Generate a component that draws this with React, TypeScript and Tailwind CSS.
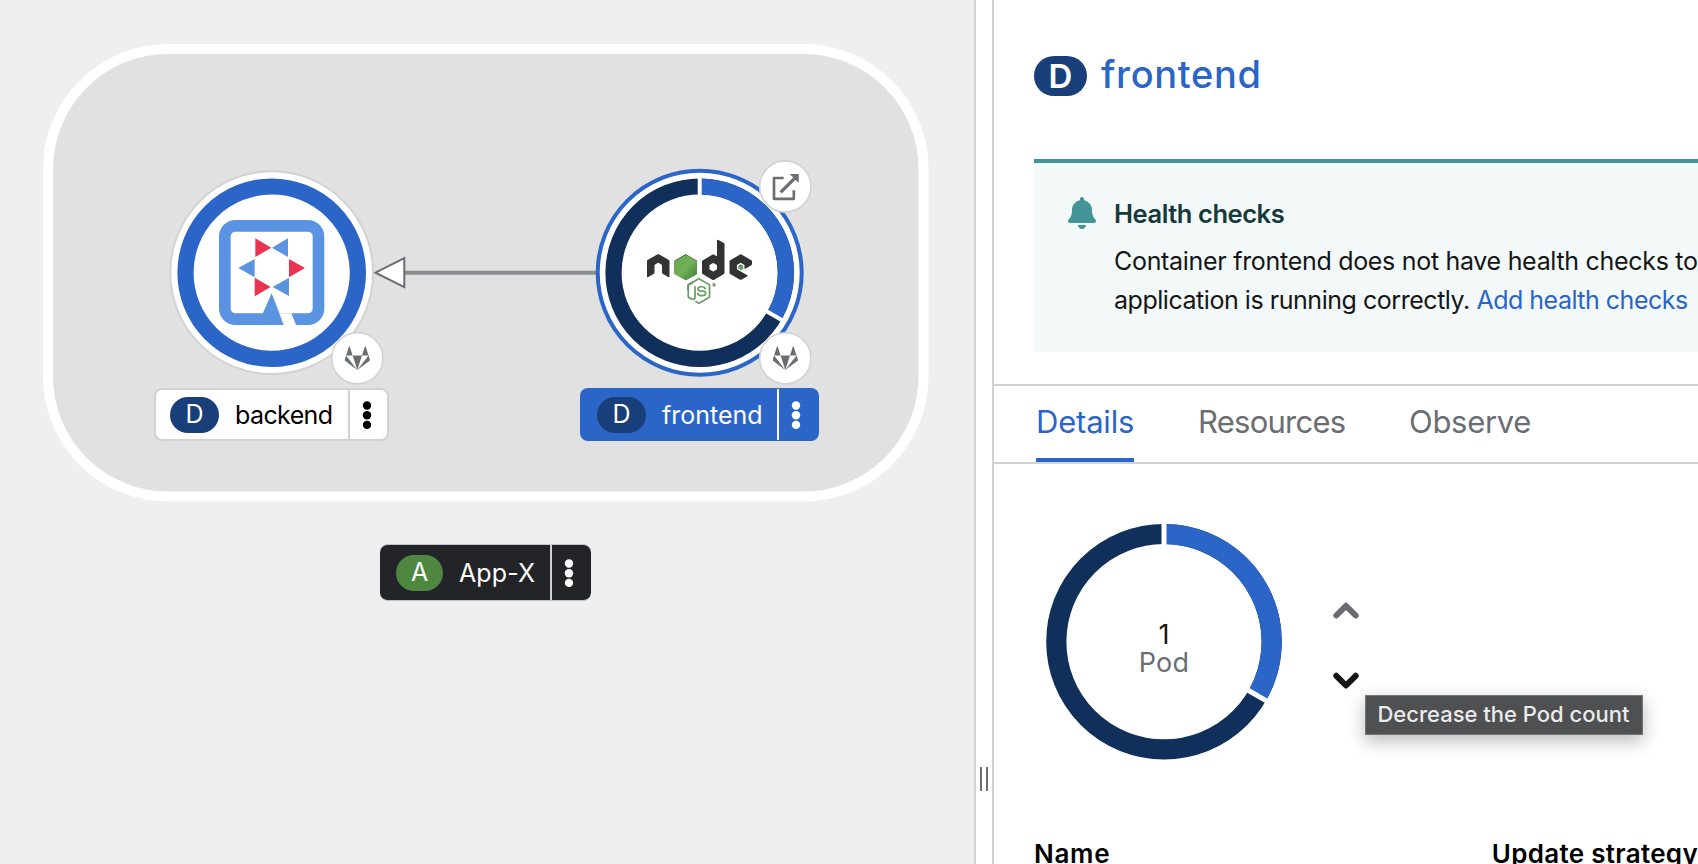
import React from "react";
import { FaBell, FaGitlab, FaNode } from "react-icons/fa";

const BLUE = "#2a65c7";
const NAVY = "#102f5a";

function Dots() {
  return (
    <svg width="10" height="30" viewBox="0 0 10 30" fill="currentColor">
      <circle cx="5" cy="5.5" r="4.2" />
      <circle cx="5" cy="15.2" r="4.2" />
      <circle cx="5" cy="24.9" r="4.2" />
    </svg>
  );
}

function Badge({ x, y, children }: { x: number; y: number; children: React.ReactNode }) {
  return (
    <g>
      <circle cx={x} cy={y} r="25.6" fill="#fff" stroke="#d2d2d2" strokeWidth="1.6" />
      {children}
    </g>
  );
}

function Donut({ cx, cy, r, width, gap }: { cx: number; cy: number; r: number; width: number; gap: number }) {
  const sin = Math.sin((Math.PI * 2) / 3);
  const inner = r - width / 2 - 1;
  const outer = r + width / 2 + 1;
  return (
    <g fill="none">
      <circle cx={cx} cy={cy} r={r} stroke={NAVY} strokeWidth={width} />
      <path d={`M${cx} ${cy - r}A${r} ${r} 0 0 1 ${cx + r * sin} ${cy + r / 2}`} stroke={BLUE} strokeWidth={width} />
      <path
        d={`M${cx} ${cy - inner}V${cy - outer}M${cx + inner * sin} ${cy + inner / 2}L${cx + outer * sin} ${cy + outer / 2}`}
        stroke="#fff"
        strokeWidth={gap}
      />
    </g>
  );
}

function QuayLogo() {
  return (
    <g transform="translate(140 150) scale(.33333)">
      <rect x="254.5" y="227.5" width="281" height="280" rx="32" fill="#fff" stroke="#5b93e3" strokeWidth="35" />
      <path d="M395 430L432 525H353Z" fill="#5b93e3" />
      <path d="M395 430L432 527H469L454 489.500H418Z" fill="#fff" />
      <path d="M346 265V321L394 293ZM447 327V382L495 354ZM344 383V439L392 411Z" fill="#ea3352" />
      <path d="M444 265V321L396 293ZM344 327V382L295 354ZM447 383V438L398 411Z" fill="#5b93e3" />
    </g>
  );
}

function NodeLogo() {
  return (
    <g>
      <defs>
        <clipPath id="node-word">
          <path d="M640 230H760V290H713V282.500L705.500 280.500L699.300 277.300L693 281V290H640Z" />
        </clipPath>
        <clipPath id="node-js">
          <path d="M683 306V284L693 281L699.300 277.300L706 281.500L713 282.700H722V306Z" />
        </clipPath>
        <linearGradient id="node-green" x1="0" y1="0" x2="1" y2="1">
          <stop offset="0" stopColor="#5da046" />
          <stop offset=".5" stopColor="#6db056" />
          <stop offset="1" stopColor="#457f38" />
        </linearGradient>
      </defs>
      <g clipPath="url(#node-word)">
        <FaNode x={647} y={219.3} size={105} color="#333333" />
      </g>
      <g clipPath="url(#node-js)">
        <FaNode x={647} y={219.3} size={105} color="#689f63" />
      </g>
      <g transform="translate(560 150) scale(.33333)">
        <path d="M378 314L411 333V373L378 391L344 373V333Z" fill="url(#node-green)" />
        <path d="M378 314L411 333L358 382L344 373V333Z" fill="#76b45a" opacity=".35" />
        <path d="M543 345L550 349V356L543 360L536 356V349Z" fill="#689f63" />
      </g>
    </g>
  );
}

function Topology() {
  return (
    <svg width="974" height="864" viewBox="0 0 974 864" className="block">
      <rect x="48" y="49" width="875.500" height="447.500" rx="120" fill="#e1e1e1" stroke="#fff" strokeWidth="10" />
      <path d="M404 272.700H596" stroke="#8a8d90" strokeWidth="4" />
      <path d="M375.500 272.700L404.300 258.200V287.200Z" fill="#fff" stroke="#6a6e73" strokeWidth="2" />

      <circle cx="271.700" cy="272.700" r="101.400" fill="#fff" stroke="#d2d2d2" strokeWidth="2" />
      <circle cx="271.700" cy="272.700" r="86.200" fill="none" stroke={BLUE} strokeWidth="16.200" />
      <QuayLogo />
      <Badge x={357.300} y={358.300}>
        <FaGitlab x={344.600} y={345.500} size={25.400} color="#6a6e73" />
      </Badge>

      <circle cx="699.700" cy="272.700" r="102" fill="#fff" stroke={BLUE} strokeWidth="4" />
      <Donut cx={699.700} cy={272.700} r={86.200} width={16.200} gap={4} />
      <NodeLogo />
      <Badge x={785.300} y={186.500}>
        <g transform="translate(560 150) scale(.33333)">
          <path d="M671 84H642V146.500H701.500V121" fill="none" stroke="#6a6e73" strokeWidth="8" strokeLinejoin="round" />
          <path d="M662 127L706 83" stroke="#6a6e73" strokeWidth="10" />
          <path d="M689 72H716V99Z" fill="#6a6e73" />
        </g>
      </Badge>
      <Badge x={785.300} y={358.300}>
        <FaGitlab x={772.600} y={345.500} size={25.400} color="#6a6e73" />
      </Badge>
    </svg>
  );
}

function NodeLabel({
  box, pill, letter, name, text, side, tracking,
}: { box: string; pill: string; letter: string; name: string; text: string; side: string; tracking: string }) {
  return (
    <div className={`absolute flex items-stretch rounded-lg text-[25px] ${box}`}>
      <div className={`flex flex-1 items-center ${text}`}>
        <span className={`flex h-9 shrink-0 items-center justify-center rounded-full pt-px text-white ${pill}`}>{letter}</span>
        <span className={`whitespace-nowrap pt-0.5 ${tracking}`}>{name}</span>
      </div>
      <div className={`flex items-center justify-center ${side}`}>
        <Dots />
      </div>
    </div>
  );
}

export default function App() {
  return (
    <div className="flex h-[864px] w-[1698px] overflow-hidden bg-white font-['Inter','Liberation_Sans',sans-serif] text-[#151515]">
      <section className="relative w-[974px] shrink-0 bg-[#efefef]">
        <Topology />
        <NodeLabel
          box="left-[154px] top-[388px] h-[53px] w-[235px] border-2 border-[#d2d2d2] bg-white text-black"
          text="pl-3.5 gap-4"
          pill="w-[49px] bg-[#193f7b]"
          letter="D"
          name="backend"
          tracking="tracking-[-0.6px]"
          side="w-[39px] border-l-2 border-[#d2d2d2] pr-1"
        />
        <NodeLabel
          box="left-[580px] top-[388px] h-[53px] w-[239px] bg-[#2a65c7] text-white"
          text="pl-[17px] gap-4"
          pill="w-[49px] bg-[#193f7b]"
          letter="D"
          name="frontend"
          tracking=""
          side="my-px w-[42px] border-l-2 border-white pr-1.5"
        />
        <NodeLabel
          box="left-[380px] top-[544px] h-[57px] w-[211px] border-y border-[#c4c5c6] bg-[#232428] text-white"
          text="pl-4 gap-4"
          pill="w-[47px] bg-[#4f8640]"
          letter="A"
          name="App-X"
          tracking="tracking-[0.1px]"
          side="w-[41px] border-l-2 border-[#d2d2d2] pr-1.5"
        />
      </section>

      <div className="flex w-5 shrink-0 justify-center gap-1 border-x-2 border-[#d2d2d2] bg-white pt-[767px]">
        <span className="h-6 w-0.5 bg-[#6a6e73]" />
        <span className="h-6 w-0.5 bg-[#6a6e73]" />
      </div>

      <section className="flex min-w-0 flex-1 flex-col">
        <header className="flex h-[159px] shrink-0 items-start pl-10 pt-14">
          <span className="flex h-10 w-[53px] items-center justify-center rounded-full bg-[#193f7b] text-[33px] font-semibold leading-none text-white">D</span>
          <h1 className="-mt-0.5 ml-3.5 text-[38px] font-medium leading-10 tracking-[0.65px] text-[#2a65c7]">frontend</h1>
        </header>

        <div className="ml-10 flex h-[193px] shrink-0 border-t-4 border-[#429496] bg-[#f3f9f9] pl-[34px] pt-8">
          <FaBell className="mt-0.5 h-8 w-7 shrink-0 text-[#429496]" />
          <div className="ml-[18px] whitespace-nowrap">
            <h2 className="text-[25.5px] font-semibold leading-[38px] tracking-[-0.45px] text-[#163939]">Health checks</h2>
            <div className="mt-[9px] text-[25px] leading-[39px]">
              <p className="tracking-[-0.3px]">Container frontend does not have health checks to</p>
              <p className="tracking-[-0.46px]">
                application is running correctly. <a className="tracking-[-0.5px] text-[#2a65c7]">Add health checks</a>
              </p>
            </div>
          </div>
        </div>

        <nav className="mt-8 flex h-20 shrink-0 gap-16 border-y-2 border-[#d2d2d2] pl-[42px] text-[31px] leading-[39px] text-[#6a6e73]">
          <span className="w-[98px] whitespace-nowrap border-b-4 border-[#2a65c7] pt-4 tracking-[-0.2px] text-[#2a65c7]">Details</span>
          <span className="w-[147px] whitespace-nowrap pt-4 tracking-[-0.75px]">Resources</span>
          <span className="whitespace-nowrap pt-4 tracking-[-0.3px]">Observe</span>
        </nav>

        <div className="relative flex h-[374px] shrink-0 pl-[50px] pt-[58px]">
          <div className="grid h-60 w-60">
            <svg width="240" height="240" viewBox="0 0 240 240" className="col-start-1 row-start-1">
              <Donut cx={120} cy={119.700} r={107.700} width={20.200} gap={5} />
            </svg>
            <div className="col-start-1 row-start-1 flex flex-col items-center pt-[99px] text-[27px] leading-7">
              <span>1</span>
              <span className="tracking-[0.3px] text-[#6a6e73]">Pod</span>
            </div>
          </div>
          <div className="ml-[48px] flex flex-col gap-[52px] pt-[79.5px]">
            <svg width="28" height="18" viewBox="0 0 28 18" fill="none" strokeWidth="6" strokeLinecap="round" strokeLinejoin="round" className="stroke-[#6a6e73]">
              <path d="M4.300 13.500L14 3.800L23.700 13.500" />
            </svg>
            <svg width="28" height="18" viewBox="0 0 28 18" fill="none" strokeWidth="6" strokeLinecap="round" strokeLinejoin="round" className="stroke-[#151515]">
              <path d="M4.300 3.800L14 13.500L23.700 3.800" />
            </svg>
          </div>
          <div className="absolute left-[371px] top-[231px] flex h-10 w-[278px] items-center justify-center whitespace-nowrap border border-[#757575] bg-[#4f5051] pb-0.5 pr-px text-[22px] font-[450] text-[#ebebeb] shadow-[0_6px_18px_rgba(0,0,0,0.28)]">
            Decrease the Pod count
          </div>
        </div>

        <div className="flex shrink-0 whitespace-nowrap pl-10 text-[26px] font-semibold leading-8 text-black">
          <span className="w-[460px] tracking-[0.7px]">Name</span>
          <span className="tracking-[0.3px]">Update strategy</span>
        </div>
      </section>
    </div>
  );
}
